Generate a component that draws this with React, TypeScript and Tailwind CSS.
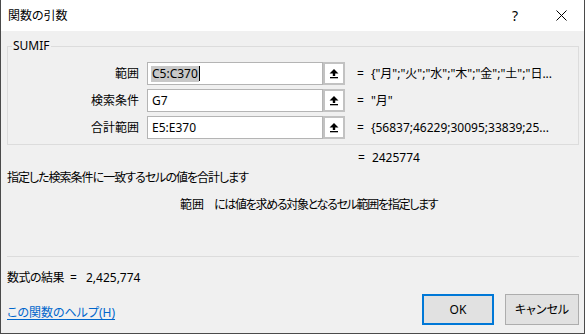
import React from "react";

type Arg = {
  label: string;
  value: string;
  result: string;
  selected?: boolean;
};

const args: Arg[] = [
  { label: "範囲", value: "C5:C370", result: "{\"月\";\"火\";\"水\";\"木\";\"金\";\"土\";\"日...", selected: true },
  { label: "検索条件", value: "G7", result: "\"月\"" },
  { label: "合計範囲", value: "E5:E370", result: "{56837;46229;30095;33839;25..." },
];

function RefButton() {
  return (
    <div className="w-[22px] h-[23px] border-2 border-[#c2c2c2] bg-white flex items-center justify-center">
      <svg width="10" height="11" viewBox="0 0 10 11">
        <path d="M5 1 L9.5 5.5 L6.2 5.5 L6.2 8 L3.8 8 L3.8 5.5 L0.5 5.5 Z" fill="#000" />
        <rect x="1" y="9" width="8" height="1.3" fill="#000" />
      </svg>
    </div>
  );
}

function ArgRow({ arg }: { arg: Arg }) {
  return (
    <div className="flex items-center h-[23px]">
      <div className="w-[131px] text-right">{arg.label}</div>
      <div className="ml-[8px] w-[176px] h-[23px] border border-[#b4b4b4] bg-white flex items-center pl-[3px]">
        {arg.selected ? (
          <>
            <span className="bg-[#c8c8c8] px-[1px]">{arg.value}</span>
            <span className="w-px h-[15px] bg-black" />
          </>
        ) : (
          <span className="px-[1px]">{arg.value}</span>
        )}
      </div>
      <RefButton />
      <span className="ml-[12px]">=</span>
      <span className="ml-[7px] whitespace-nowrap">{arg.result}</span>
    </div>
  );
}

export default function App() {
  return (
    <div className="w-[587px] h-[334px] bg-white flex font-['Noto_Sans','Noto_Sans_CJK_JP',sans-serif] text-[12px] leading-[16px] text-black [font-feature-settings:'palt']">
      <div className="w-[585px] h-[334px] border-l border-r border-b border-[#4a4a4a] bg-[#f0f0f0] flex flex-col">
        {/* title bar */}
        <div className="h-[31px] bg-white flex items-center shrink-0">
          <span className="ml-[7px] text-[12px]">関数の引数</span>
          <div className="ml-auto flex h-full">
            <div className="w-[46px] h-full flex items-center justify-center text-[14px]">?</div>
            <div className="w-[46px] h-full flex items-center justify-center">
              <svg width="11" height="11" viewBox="0 0 11 11">
                <path d="M0.5 0.5 L10.5 10.5 M10.5 0.5 L0.5 10.5" stroke="#000" strokeWidth="1" />
              </svg>
            </div>
          </div>
        </div>

        {/* body */}
        <fieldset className="ml-[6px] mt-[7px] w-[572px] border border-[#dcdcdc] pt-[8px] pb-[5px] flex flex-col gap-[4px]">
          <legend className="ml-[4px] px-[1px] leading-[16px]">SUMIF</legend>
          {args.map((a) => (
            <ArgRow key={a.label} arg={a} />
          ))}
        </fieldset>

        <div className="mt-[5px] flex">
          <span className="ml-[357px]">=</span>
          <span className="ml-[7px]">2425774</span>
        </div>

        <div className="mt-[4px] ml-[6px] tracking-[-1px]">指定した検索条件に一致するセルの値を合計します</div>
        <div className="mt-[11px] ml-[179px] flex">
          <span>範囲</span>
          <span className="ml-[10px] tracking-[-1.3px]">には値を求める対象となるセル範囲を指定します</span>
        </div>

        <div className="mt-[43px] ml-[6px] w-[572px] h-px bg-[#dcdcdc]" />

        <div className="mt-[13px] ml-[6px] flex">
          <span className="tracking-[-0.5px]">数式の結果</span>
          <span className="ml-[6px]">=</span>
          <span className="ml-[9px]">2,425,774</span>
        </div>

        <div className="mt-[8px] flex items-start">
          <a className="ml-[6px] mt-[11px] text-[#0066cc] underline underline-offset-2">この関数のヘルプ(H)</a>
          <button className="ml-auto w-[72px] h-[31px] border-2 border-[#0078d7] bg-[#e1e1e1]">OK</button>
          <button className="ml-[11px] mr-[5px] w-[74px] h-[31px] border border-[#adadad] bg-[#e1e1e1]">キャンセル</button>
        </div>
      </div>
    </div>
  );
}
